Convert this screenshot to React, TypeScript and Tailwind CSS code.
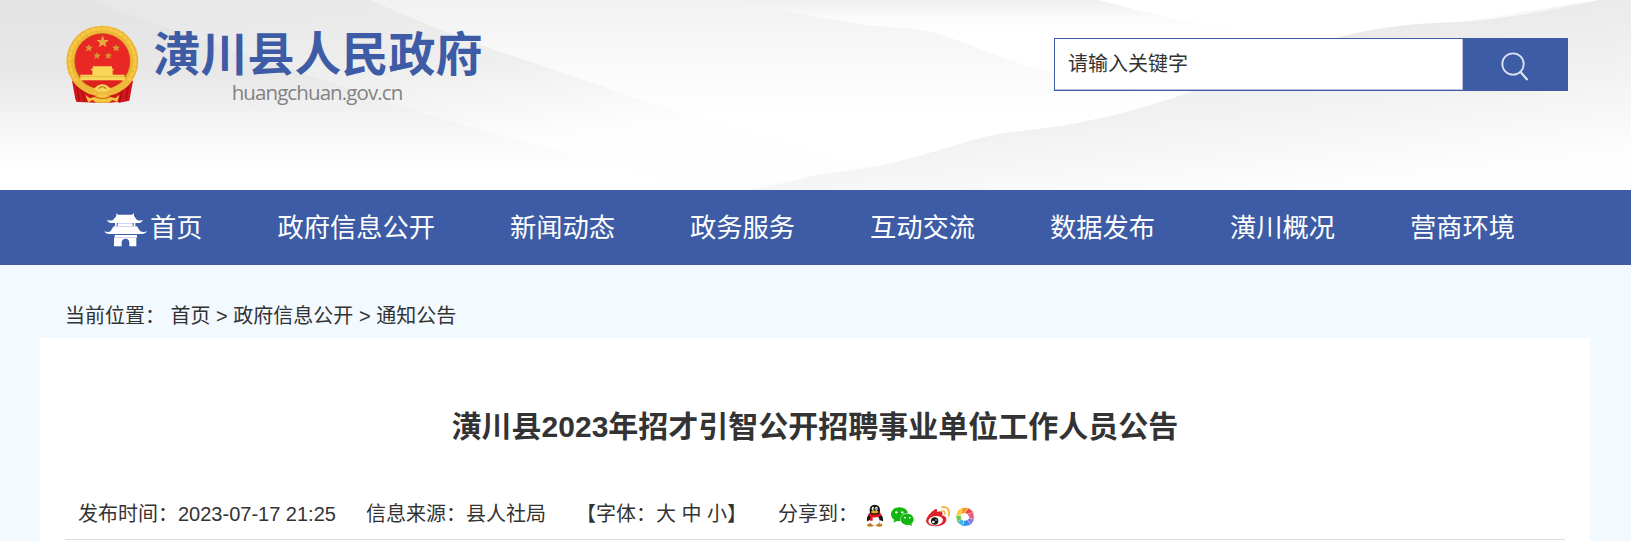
import React from 'react';

const navItems = ['政府信息公开', '新闻动态', '政务服务', '互动交流', '数据发布', '潢川概况', '营商环境'];

const HeaderBackground: React.FC = () => (
  <svg className="absolute inset-0 h-full w-full" viewBox="0 0 1631 190" preserveAspectRatio="none">
    <defs>
      <linearGradient id="left" x1="0" y1="0" x2="0" y2="1">
        <stop offset="0" stopColor="#e3e3e3" />
        <stop offset="0.4" stopColor="#e8e8e8" />
        <stop offset="0.75" stopColor="#fafafa" />
        <stop offset="0.9" stopColor="#ffffff" />
      </linearGradient>
      <linearGradient id="mid" gradientUnits="userSpaceOnUse" x1="300" y1="0" x2="325" y2="190">
        <stop offset="0" stopColor="#e8e8e8" />
        <stop offset="0.45" stopColor="#efefef" />
        <stop offset="0.9" stopColor="#fefefe" />
      </linearGradient>
      <linearGradient id="sheet" gradientUnits="userSpaceOnUse" x1="0" y1="0" x2="0" y2="115">
        <stop offset="0" stopColor="#f1f1f1" />
        <stop offset="0.5" stopColor="#f9f9f9" />
        <stop offset="1" stopColor="#ffffff" />
      </linearGradient>
      <linearGradient id="top" gradientUnits="userSpaceOnUse" x1="0" y1="0" x2="0" y2="36">
        <stop offset="0" stopColor="#efefef" />
        <stop offset="0.5" stopColor="#fbfbfb" />
        <stop offset="1" stopColor="#ffffff" />
      </linearGradient>
      <linearGradient id="right" gradientUnits="userSpaceOnUse" x1="1300" y1="20" x2="1318" y2="190">
        <stop offset="0" stopColor="#e9e9e9" />
        <stop offset="0.5" stopColor="#f2f2f2" />
        <stop offset="1" stopColor="#fefefe" />
      </linearGradient>
    </defs>
    <rect width="1631" height="190" fill="url(#left)" />
    <path d="M92 0C150 24 220 46 300 72C360 92 430 118 520 140L700 190H1631V0Z" fill="url(#mid)" />
    <path d="M370 0C420 22 460 38 510 55C580 78 650 104 723 125C760 134 790 144 830 156L940 190H1631V0Z" fill="url(#sheet)" />
    <path d="M738 0C765 6 790 12 816 16C850 24 880 27 905 28C935 30 950 38 970 45C1000 56 1020 66 1050 71L1200 112H1631V0Z" fill="url(#top)" />
    <path d="M1098 0C1160 16 1220 30 1300 40H1330L1420 28L1600 0Z" fill="#ffffff" />
    <path d="M750 190C780 184 800 179 816 175C850 171 875 167 900 161C940 151 980 136 1010 132C1060 128 1130 115 1195 90C1240 70 1290 50 1335 38C1380 26 1420 23 1460 22C1510 18 1555 10 1600 0H1631V190Z" fill="url(#right)" />
  </svg>
);

const Emblem: React.FC = () => (
  <svg className="h-[90px] w-[85px]" viewBox="0 0 255 270">
    <path d="M36 182L54 186L78 216L128 208L178 216L200 186L219 182L208 242L178 248L172 246L150 248H104L80 247L50 246L46 238Z" fill="#d3161b" />
    <path d="M62 205L76 246M190 200L178 246M50 200L58 240M205 200L198 238" stroke="#a40d12" strokeWidth="4" />
    <ellipse cx="127" cy="123" rx="108" ry="106" fill="#edb634" />
    <ellipse cx="127" cy="123" rx="98" ry="97" fill="none" stroke="#f7c946" strokeWidth="9" strokeDasharray="14 3" />
    <ellipse cx="127" cy="124" rx="84" ry="84" fill="#b8651d" />
    <ellipse cx="127" cy="122" rx="82" ry="81" fill="#e92724" />
    <path d="M128 46L133 60L147 60L136 69L140 82L128 74L116 82L120 69L109 60L123 60Z" fill="#e3ae3c" />
    <path d="M87 74L90 81L97 82L91 87L92 93L86 89L79 92L82 85L77 80L84 80ZM169 74L171 80L178 81L173 85L176 92L169 89L162 93L164 86L158 81L166 80ZM111 98L114 104L121 104L115 109L117 115L111 112L104 115L107 108L102 104L109 104ZM146 98L148 104L155 104L149 108L151 115L145 112L138 115L141 109L136 104L143 104Z" fill="#d79b34" stroke="#d79b34" strokeWidth="1.5" />
    <path d="M98 139H156V146H161V151H93V146H98ZM97 151H158V164H194V181H61V164H97Z" fill="#f8d657" />
    <path d="M61 170H194" stroke="#dfa83c" strokeWidth="2" />
    <path d="M66 184H188Q160 206 127 207Q93 206 66 184Z" fill="#dd211f" />
    <path d="M50 180Q94 222 127 203Q165 222 205 180L209 192Q176 223 147 220L136 229H119L106 220Q77 223 46 192Z" fill="#eeb83d" />
    <path d="M102 206Q127 180 152 206L139 215H116Z" fill="#f7d45c" />
    <path d="M116 206Q127 194 139 206" fill="none" stroke="#c77a20" strokeWidth="4" />
    <path d="M76 225L89 235L106 230L120 223H136L149 230L166 235L178 225L172 246L157 240L147 248H108L98 240L85 247Z" fill="#f4c63f" />
    <path d="M106 231L120 235H135L149 231" fill="none" stroke="#ce761e" strokeWidth="4" />
  </svg>
);

const GateIcon: React.FC = () => (
  <svg className="h-[37px] w-[47px] shrink-0" viewBox="40 80 141 111" fill="#ffffff">
    <path d="M80 86Q82 91 87 91H125Q130 91 133 86V95L142 107Q151 111 160 106Q156 116 145 116H68Q56 116 51 106Q61 111 70 107L80 95Z" />
    <path d="M76 116H81V126H76ZM132 116H137V126H132ZM84 117H129V125H84Z" />
    <path d="M72 126H142L151 140Q160 145 172 141Q166 151 151 149H64Q49 151 44 141Q56 145 63 140Z" />
    <path d="M75 152H142V160H75Z" />
    <path d="M75 160H140V186H119V174Q118 163 108 163Q97 163 96 174V186H73V160Z" />
  </svg>
);

const SearchIcon: React.FC = () => (
  <svg className="mt-0.5 h-[30px] w-[30px]" viewBox="0 0 30 30" fill="none" stroke="#dbe2f1" strokeWidth="1.8">
    <circle cx="13" cy="13" r="10.7" />
    <path d="M20.5 21L27.5 29" strokeWidth="2.2" />
  </svg>
);

const ShareIcons: React.FC = () => (
  <div className="ml-[7px] mt-[3px] flex">
    {/* QQ */}
    <svg className="h-6 w-[25px]" viewBox="75 40 75 72">
      <path d="M81 92Q79 76 90 68Q85 43 104 42Q124 43 119 68Q131 78 129 92L118 88V104H90V88Z" fill="#151515" />
      <ellipse cx="104" cy="90" rx="15" ry="16" fill="#ffffff" />
      <ellipse cx="99" cy="54" rx="4" ry="6" fill="#ffffff" />
      <ellipse cx="109" cy="54" rx="4" ry="6" fill="#ffffff" />
      <circle cx="100" cy="55" r="2" fill="#111111" />
      <circle cx="108" cy="55" r="2" fill="#111111" />
      <ellipse cx="104" cy="64" rx="11" ry="4" fill="#f5a914" />
      <path d="M87 67Q104 78 122 67L124 75Q113 81 98 80V90H90V77L85 74Z" fill="#e3161b" />
      <path d="M81 104Q83 97 94 99L102 105Q95 110 82 107ZM106 105L114 99Q126 97 128 104Q126 110 110 107Z" fill="#b9811c" />
    </svg>
    {/* WeChat */}
    <svg className="h-6 w-[33px]" viewBox="150 40 99 72">
      <path d="M178 50C163 50 153 59 153 71C153 78 157 84 163 88L160 96L171 91Q176 92 181 91C180 76 190 67 204 67C201 56 191 50 178 50Z" fill="#12b60f" />
      <path d="M202 69C191 69 182 76 182 86C182 96 191 103 202 103L208 102L216 107L214 100C218 97 221 92 221 86C221 76 213 69 202 69Z" fill="#12b60f" />
      <g fill="#ffffff"><circle cx="169" cy="65" r="3.5" /><circle cx="187" cy="65" r="3.5" /><circle cx="195" cy="81" r="2.6" /><circle cx="209" cy="81" r="2.6" /></g>
    </svg>
    {/* Weibo */}
    <svg className="h-6 w-[32px]" viewBox="249 40 96 72">
      <path d="M285 56Q293 52 291 64Q306 58 308 68L306 74Q321 77 319 89Q315 106 288 107Q261 107 258 92Q258 75 285 56Z" fill="#df2227" />
      <ellipse cx="287" cy="90" rx="22" ry="14" fill="#ffffff" transform="rotate(-7 287 90)" />
      <circle cx="284" cy="91" r="11" fill="#161616" />
      <circle cx="280" cy="94" r="4" fill="#ffffff" />
      <circle cx="288" cy="88" r="2" fill="#ffffff" />
      <path d="M304 50Q333 46 326 77" fill="none" stroke="#f7a52a" strokeWidth="5" />
      <path d="M305 61Q317 59 315 73" fill="none" stroke="#f7a52a" strokeWidth="4" />
    </svg>
    {/* Moments */}
    <svg className="h-6 w-[20px]" viewBox="348 40 60 72">
      <g transform="translate(378 79)">
        <path d="M-8 -28L10 -27L-1 -12L-12 -9Z" fill="#f59a23" />
        <path d="M11 -27L25 -14L9 -9L-1 -12Z" fill="#f0483e" />
        <path d="M25 -14L27 8L14 3L8 -9Z" fill="#e75a88" />
        <path d="M27 8L17 24L8 9L14 2Z" fill="#8e76db" />
        <path d="M17 24L-6 28L-4 12L8 9Z" fill="#3d8df0" />
        <path d="M-6 28L-23 16L-11 7L-4 12Z" fill="#36b9e8" />
        <path d="M-23 16L-27 -4L-13 -5L-11 7Z" fill="#72c952" />
        <path d="M-27 -4L-21 -20L-8 -28L-12 -7Z" fill="#f8cb42" />
        <path d="M-8 -28L-12 -8M11 -27L-1 -12M25 -14L8 -9M27 8L12 1M17 24L8 9M-6 28L-4 12M-23 16L-11 7M-27 -4L-13 -5" stroke="#ffffff" strokeWidth="1" />
      </g>
    </svg>
  </div>
);

const Header: React.FC = () => (
  <header className="relative h-[190px] overflow-hidden">
    <HeaderBackground />
    <div className="relative flex items-start justify-between pl-[60px] pr-[63px]">
      <div className="flex pt-5">
        <Emblem />
        <div className="ml-[8px] flex w-[330px] flex-col items-center pt-2.5">
          <h1 className="whitespace-nowrap text-[47px] font-bold leading-[50px] text-[#3d5ca5]">潢川县人民政府</h1>
          <span className="mr-[2px] font-['Open_Sans'] text-[20.5px] leading-6 tracking-[-0.9px] text-[#828282]">huangchuan.gov.cn</span>
        </div>
      </div>
      <form className="mt-[38px] flex h-[53px] w-[514px] border border-[#3d5ca5]">
        <div className="flex flex-1 items-center border-r border-b border-[#b9c2d6] bg-white pl-[13px] text-xl text-[#333]">请输入关键字</div>
        <button type="button" className="flex w-[104px] items-center justify-center bg-[#3d5ca5]">
          <SearchIcon />
        </button>
      </form>
    </div>
  </header>
);

const App: React.FC = () => {
  return (
    <div className="h-[541px] overflow-hidden bg-[#f2f9ff] font-['Liberation_Sans','Noto_Sans_CJK_SC',sans-serif] text-[#333]">
      <Header />
      <nav className="flex h-[75px] items-center gap-[74.8px] whitespace-nowrap bg-[#3d5ca5] pl-[103px] pt-[3px] text-[26.3px] text-white">
        <a href="#" className="flex items-center">
          <GateIcon />
          <span>首页</span>
        </a>
        {navItems.map((item) => (
          <a key={item} href="#">{item}</a>
        ))}
      </nav>

      <div className="flex h-[73px] items-center pl-[65px] pt-[29px] text-xl">
        当前位置：&nbsp;首页 &gt; 政府信息公开 &gt; 通知公告
      </div>

      <main className="ml-10 h-[203px] w-[1550px] bg-white px-[25px]">
        <h2 className="pt-[66px] text-center text-[30px] font-bold leading-[45px]">潢川县2023年招才引智公开招聘事业单位工作人员公告</h2>
        <div className="mt-[43px] flex h-[48px] items-center whitespace-pre border-b border-[#ddd] pb-[3px] pl-[13px] text-xl">
          <span className="mr-[30px]">发布时间：2023-07-17 21:25</span>
          <span className="mr-[30px]">信息来源：县人社局</span>
          <span className="mr-[31px]">【字体：大 中 小】</span>
          <span>分享到：</span>
          <ShareIcons />
        </div>
      </main>
    </div>
  );
};

export default App;
